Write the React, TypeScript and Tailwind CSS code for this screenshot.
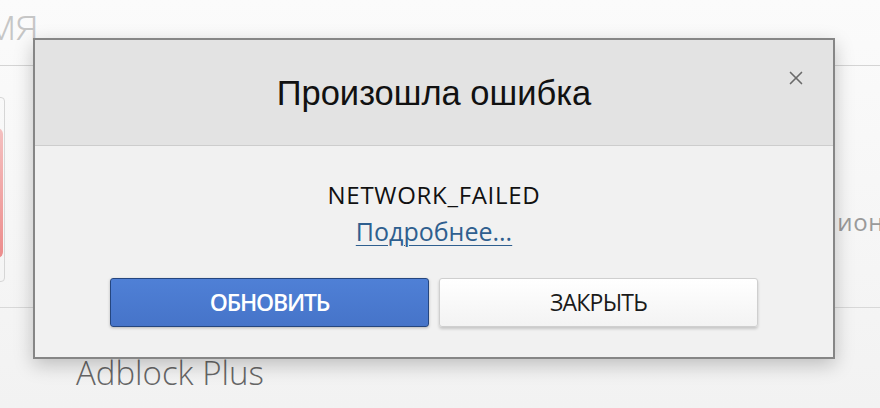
import { X } from 'lucide-react';

function Background() {
  return (
    <div className="relative h-[408px] w-[880px] overflow-hidden bg-gradient-to-b from-[#fbfbfb] to-[#f2f2f2] font-['Open_Sans',sans-serif]">
      <div className="h-[66px] border-b border-[#d4d4d4]">
        <p className="-ml-[14px] pt-[0px] text-[44px] font-light leading-[46px] text-[#c6c6c6]">мя</p>
      </div>
      <div className="flex h-[242px] items-start justify-between border-b border-[#d8d8d8]">
        <div className="ml-[-20px] mt-[31px] flex h-[185px] w-[25px] items-start justify-end rounded-sm border border-[#d6d6d6] pr-[1px] pt-[30px]">
          <div className="h-[130px] w-[10px] rounded-r-md bg-gradient-to-b from-[#f4c0c0] to-[#ec8c8c]"></div>
        </div>
        <p className="mr-[-4px] mt-[138px] text-[24px] tracking-wide text-[#9a9a9a]">ион</p>
      </div>
      <p className="ml-[76px] mt-[45px] text-[33px] font-light leading-[40px] text-[#666]">Adblock Plus</p>
      <ErrorDialog />
    </div>
  );
}

function ErrorDialog() {
  return (
    <div className="absolute left-[33px] top-[38px] flex h-[321px] w-[802px] flex-col border-2 border-[#868686] bg-[#f1f1f1] shadow-[0_6px_18px_rgba(0,0,0,0.22)]">
      <div className="relative flex h-[106px] shrink-0 items-center justify-center border-b border-[#cdcdcd] bg-[#e3e3e3]">
        <h2 className="font-['Liberation_Sans',sans-serif] text-[34.5px] leading-[40px] text-[#111]">Произошла ошибка</h2>
        <button className="absolute right-[26px] top-[27px] text-[#6a6a6a]">
          <X size={22} strokeWidth={1.8} />
        </button>
      </div>
      <div className="flex flex-1 flex-col items-center pt-[34px]">
        <p className="text-[24px] leading-[30px] tracking-[0.7px] text-[#111]">NETWORK_FAILED</p>
        <a href="#" className="mt-[6px] text-[25px] leading-[30px] text-[#2f5f8f] underline decoration-1 underline-offset-[4px]">
          Подробнее...
        </a>
        <div className="mt-[32px] flex w-full gap-[10px] px-[75px]">
          <button className="h-[49px] flex-1 rounded-[3px] border border-[#25467f] bg-gradient-to-b from-[#4f80d6] to-[#4674c9] text-[23px] font-semibold tracking-[-1.2px] text-white shadow-[0_1px_3px_rgba(0,0,0,0.25)]">
            ОБНОВИТЬ
          </button>
          <button className="h-[49px] flex-1 rounded-[3px] border border-[#cfcfcf] bg-gradient-to-b from-[#ffffff] to-[#f3f3f3] text-[23px] font-normal tracking-[-0.8px] text-[#1a1a1a] shadow-[0_2px_3px_rgba(0,0,0,0.18)]">
            ЗАКРЫТЬ
          </button>
        </div>
      </div>
    </div>
  );
}

export default function App() {
  return <Background />;
}
